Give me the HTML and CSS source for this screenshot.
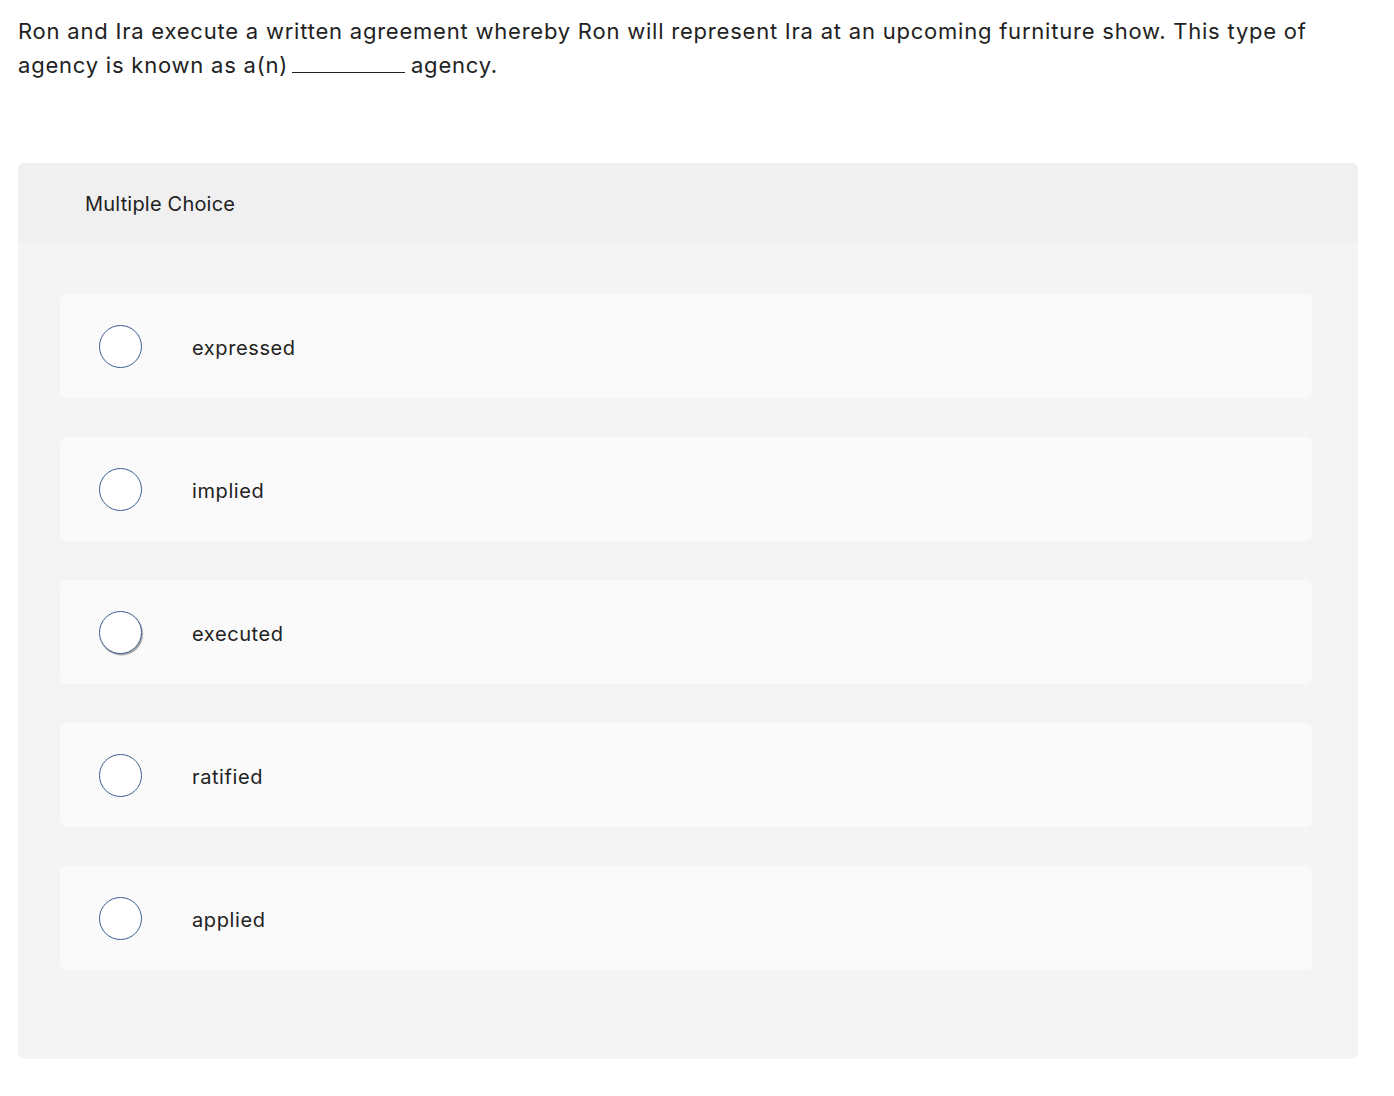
FILE: index.html
```html
<!DOCTYPE html>
<html>
<head>
<meta charset="utf-8">
<link rel="stylesheet" href="styles.css">
</head>
<body>
<div class="page">
  <p class="question">Ron and Ira execute a written agreement whereby Ron will represent Ira at an upcoming furniture show. This type of agency is known as a(n) <span class="blank"></span> agency.</p>
  <section class="card">
    <header class="card-head">Multiple Choice</header>
    <div class="card-body">
      <label class="option"><span class="radio"></span><span class="opt-text">expressed</span></label>
      <label class="option"><span class="radio"></span><span class="opt-text">implied</span></label>
      <label class="option"><span class="radio radio-hover"></span><span class="opt-text">executed</span></label>
      <label class="option"><span class="radio"></span><span class="opt-text">ratified</span></label>
      <label class="option"><span class="radio"></span><span class="opt-text">applied</span></label>
    </div>
  </section>
</div>
</body>
</html>
```
FILE: styles.css
```css
html, body {
  margin: 0;
  padding: 0;
  background: #ffffff;
}
body {
  font-family: "Inter", "Lato", sans-serif;
  color: #222222;
}
.page {
  padding: 14px 36px 0 18px;
}
.question {
  margin: 0;
  width: 1310px;
  font-size: 22px;
  line-height: 34px;
  letter-spacing: 0.78px;
  color: #222222;
}
.blank {
  display: inline-block;
  width: 113px;
  border-bottom: 1.5px solid #222222;
  vertical-align: baseline;
  margin: 0 -1px 0 -3px;
}
.card {
  margin-top: 81px;
  width: 1340px;
  border-radius: 6px;
  background: #f4f4f4;
  overflow: hidden;
}
.card-head {
  background: #f0f0f0;
  height: 80px;
  display: flex;
  align-items: center;
  padding-left: 67px;
  padding-top: 1px;
  box-sizing: border-box;
  font-size: 20px;
  letter-spacing: 0.2px;
  color: #222222;
}
.card-body {
  padding: 51px 46px 89px 42px;
  display: flex;
  flex-direction: column;
  gap: 39px;
}
.option {
  display: flex;
  align-items: center;
  height: 104px;
  background: #fafafa;
  border-radius: 6px;
  padding-left: 39px;
}
.radio {
  width: 41px;
  height: 41px;
  border-radius: 50%;
  border: 1.5px solid #3a5e8e;
  background: #ffffff;
  flex: none;
}
.radio-hover {
  box-shadow: 1px 1.5px 1px rgba(0,0,0,0.35);
}
.opt-text {
  margin-left: 50px;
  padding-top: 3px;
  font-size: 20px;
  letter-spacing: 0.6px;
  color: #222222;
}
```
